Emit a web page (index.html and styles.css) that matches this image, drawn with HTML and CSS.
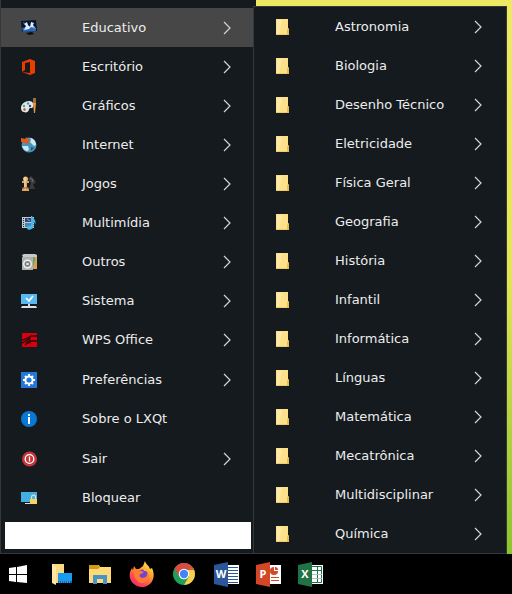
FILE: index.html
```html
<!DOCTYPE html>
<html lang="pt-BR">
<head>
<meta charset="utf-8">
<meta name="viewport" content="width=device-width, initial-scale=1">
<title>Menu de aplicativos</title>
<link rel="stylesheet" href="styles.css">
</head>
<body>
<svg class="defs" aria-hidden="true">
  <symbol id="chevron" viewBox="0 0 8 14"><path d="M1 1L7 7L1 13" fill="none" stroke="#d3d5d6" stroke-width="1.2"/></symbol>
  <symbol id="folder" viewBox="0 0 16 16"><path d="M2 0H14V9L15 10V16H2Z" fill="#fde08a"/><path d="M3 1H8L5 15H3Z" fill="#ffe9a8"/><path d="M13 16V11L14 9L15 10V16Z" fill="#e9bd4c"/><path d="M2 15H13V16H2Z" fill="#f0cd6c"/></symbol>
</svg>
<main class="desktop">
  <nav class="menu menu-main" aria-label="Menu principal">
    <ul class="items">
      <li><button class="item active" type="button">
        <svg class="icon" viewBox="0 0 16 16"><path d="M0 1L15 0L16 11L1 12Z" fill="#07142f"/><path d="M1 8L8 6L15 8V11L2 12Z" fill="#2f66b4"/><path d="M3 4L6 2L7 5L9 7L10 2L13 3L12 5L14 8L10 7L8 9L3 10L5 6Z" fill="#dcecff"/><path d="M2 2L4 3L3 4ZM13 6L15 9L12 8Z" fill="#6aa7ed"/><path d="M5 13L11 12L13 14L8 15Z" fill="#0b0d11"/></svg>
        <span class="label">Educativo</span><svg class="chevron"><use href="#chevron"/></svg></button></li>
      <li><button class="item" type="button">
        <svg class="icon" viewBox="0 0 16 16"><path d="M1 3L9 0L14 2V14L9 16L1 13L9 14V3L4 4V11L1 13Z" fill="#eb3c00"/></svg>
        <span class="label">Escritório</span><svg class="chevron"><use href="#chevron"/></svg></button></li>
      <li><button class="item" type="button">
        <svg class="icon" viewBox="0 0 16 16"><path d="M0 10C0 6 4 3 8 3C12 3 13 6 12 9C11 11 9 9 8 11C8 14 5 15 3 14C1 14 0 12 0 10Z" fill="#dfe9e9"/><circle cx="3" cy="8" r="1.2" fill="#58a94d"/><circle cx="7" cy="5.5" r="1.2" fill="#3e9dc5"/><circle cx="3.5" cy="11.5" r="1.2" fill="#c44040"/><circle cx="9" cy="8" r="1.2" fill="#314d72"/><path d="M12 0H15V5H12Z" fill="#a56b3c"/><path d="M12 5H15L14 15H13Z" fill="#e69a43"/></svg>
        <span class="label">Gráficos</span><svg class="chevron"><use href="#chevron"/></svg></button></li>
      <li><button class="item" type="button">
        <svg class="icon" viewBox="0 0 16 16"><circle cx="8" cy="8" r="7.5" fill="#4795b9"/><path d="M9 1C12 1 15 4 15 8L13 9L11 7L9 5L10 3ZM3 9L7 9L8 12L7 14C4 14 2 12 1 9Z" fill="#cce9f1"/><path d="M10 10L13 11L10 14Z" fill="#1c5b82"/><path d="M0 1L5 2V0L9 4L5 8V6L0 5Z" fill="#e4591b"/></svg>
        <span class="label">Internet</span><svg class="chevron"><use href="#chevron"/></svg></button></li>
      <li><button class="item" type="button">
        <svg class="icon" viewBox="0 0 16 16"><path d="M7 3L10 0L13 3L15 7L12 8L14 13H8L10 7Z" fill="#3d3b3a"/><path d="M9 2L12 4L11 6" fill="none" stroke="#77716a"/><circle cx="4.5" cy="3" r="2.5" fill="#e4b979"/><path d="M1 5H8V7H6V11L8 13V15H1V13L3 11V7H1Z" fill="#d8a45f"/><path d="M4 1V14" stroke="#ffe6b2"/><path d="M1 12H8" stroke="#8b5b2c"/></svg>
        <span class="label">Jogos</span><svg class="chevron"><use href="#chevron"/></svg></button></li>
      <li><button class="item" type="button">
        <svg class="icon" viewBox="0 0 16 16"><path d="M1 2H13V13H1Z" fill="#b9cbd2"/><path d="M4 3H11V7H4Z" fill="#354675"/><path d="M4 8H11V12H4Z" fill="#4a87ac"/><path d="M2.5 3V13M12 3V13" stroke="#23323b" stroke-dasharray="1 1"/><path d="M6 4L9 6" stroke="#b493c9"/><path d="M11 1C12 4 16 5 14 10C14 7 13 7 12 7V12C12 15 6 16 6 13C6 11 9 10 10 11V1Z" fill="#42b8ef"/></svg>
        <span class="label">Multimídia</span><svg class="chevron"><use href="#chevron"/></svg></button></li>
      <li><button class="item" type="button">
        <svg class="icon" viewBox="0 0 16 16"><path d="M1 1L3 0H14L16 1V3H2Z" fill="#c7c9c7"/><path d="M10 3H16V15H10Z" fill="#d7a257"/><path d="M11 3H14V7L12 13Z" fill="#6f9d69"/><path d="M1 3H12V16H1Z" fill="#aeb2ae"/><circle cx="6.5" cy="10" r="4.5" fill="#f0f1ef"/><circle cx="6.5" cy="10" r="3" fill="#7d837f"/><circle cx="6.5" cy="10" r="1.3" fill="#e3e5e3"/></svg>
        <span class="label">Outros</span><svg class="chevron"><use href="#chevron"/></svg></button></li>
      <li><button class="item" type="button">
        <svg class="icon" viewBox="0 0 16 16"><path d="M0 1H16V11H0Z" fill="#57b9ef"/><path d="M5 5L8 8L12 3" fill="none" stroke="#fff" stroke-width="1.7"/><path d="M7 11H9V13H7ZM1 13H15L16 15H0Z" fill="#d9e0e5"/></svg>
        <span class="label">Sistema</span><svg class="chevron"><use href="#chevron"/></svg></button></li>
      <li><button class="item" type="button">
        <svg class="icon" viewBox="0 0 16 16"><rect x="1" y="1" width="15" height="14" rx="1" fill="#d7000f"/><path d="M1 8C5 8 7 5 10 4H16M1 11C5 10 7 7 9 6L8 9H16M7 9L5 12L10 10" fill="none" stroke="#2c080b" stroke-width="1.3"/></svg>
        <span class="label">WPS Office</span><svg class="chevron"><use href="#chevron"/></svg></button></li>
    </ul>
    <ul class="items">
      <li><button class="item" type="button">
        <svg class="icon" viewBox="0 0 16 16"><path d="M0 0H16V16H0Z" fill="#2677db"/><path d="M8 2V14M2 8H14M4 4L12 12M12 4L4 12" stroke="#fff" stroke-width="2"/><circle cx="8" cy="8" r="3.6" fill="#2677db" stroke="#fff" stroke-width="2"/></svg>
        <span class="label">Preferências</span><svg class="chevron"><use href="#chevron"/></svg></button></li>
      <li><button class="item" type="button">
        <svg class="icon" viewBox="0 0 16 16"><circle cx="8" cy="8" r="8" fill="#0878d4"/><path d="M7 3H9V5H7ZM7 6H9V13H7Z" fill="#fff"/></svg>
        <span class="label">Sobre o LXQt</span></button></li>
    </ul>
    <ul class="items">
      <li><button class="item" type="button">
        <svg class="icon" viewBox="0 0 16 16"><circle cx="8.5" cy="8" r="7.5" fill="#c5353b"/><circle cx="8.5" cy="8" r="4.3" fill="none" stroke="#fff" stroke-width="1.3"/><path d="M8.5 5.5V10.5" stroke="#fff" stroke-width="1.3"/></svg>
        <span class="label">Sair</span><svg class="chevron"><use href="#chevron"/></svg></button></li>
      <li><button class="item" type="button">
        <svg class="icon" viewBox="0 0 16 16"><path d="M0 2H16V12H0Z" fill="#45aee0"/><path d="M4 13H10V14H4Z" fill="#d8e3e9"/><path d="M10.5 9V7C10.5 4.5 14.5 4.5 14.5 7V9" fill="none" stroke="#dce0dc" stroke-width="1.2"/><path d="M9 9H16V14H9Z" fill="#f4d35e"/></svg>
        <span class="label">Bloquear</span></button></li>
    </ul>
    <input class="search" type="text" aria-label="Pesquisar">
  </nav>
  <nav class="menu menu-sub" aria-label="Educativo">
    <ul class="items">
      <li><button class="item" type="button"><svg class="icon"><use href="#folder"/></svg><span class="label">Astronomia</span><svg class="chevron"><use href="#chevron"/></svg></button></li>
      <li><button class="item" type="button"><svg class="icon"><use href="#folder"/></svg><span class="label">Biologia</span><svg class="chevron"><use href="#chevron"/></svg></button></li>
      <li><button class="item" type="button"><svg class="icon"><use href="#folder"/></svg><span class="label">Desenho Técnico</span><svg class="chevron"><use href="#chevron"/></svg></button></li>
      <li><button class="item" type="button"><svg class="icon"><use href="#folder"/></svg><span class="label">Eletricidade</span><svg class="chevron"><use href="#chevron"/></svg></button></li>
      <li><button class="item" type="button"><svg class="icon"><use href="#folder"/></svg><span class="label">Física Geral</span><svg class="chevron"><use href="#chevron"/></svg></button></li>
      <li><button class="item" type="button"><svg class="icon"><use href="#folder"/></svg><span class="label">Geografia</span><svg class="chevron"><use href="#chevron"/></svg></button></li>
      <li><button class="item" type="button"><svg class="icon"><use href="#folder"/></svg><span class="label">História</span><svg class="chevron"><use href="#chevron"/></svg></button></li>
      <li><button class="item" type="button"><svg class="icon"><use href="#folder"/></svg><span class="label">Infantil</span><svg class="chevron"><use href="#chevron"/></svg></button></li>
      <li><button class="item" type="button"><svg class="icon"><use href="#folder"/></svg><span class="label">Informática</span><svg class="chevron"><use href="#chevron"/></svg></button></li>
      <li><button class="item" type="button"><svg class="icon"><use href="#folder"/></svg><span class="label">Línguas</span><svg class="chevron"><use href="#chevron"/></svg></button></li>
      <li><button class="item" type="button"><svg class="icon"><use href="#folder"/></svg><span class="label">Matemática</span><svg class="chevron"><use href="#chevron"/></svg></button></li>
      <li><button class="item" type="button"><svg class="icon"><use href="#folder"/></svg><span class="label">Mecatrônica</span><svg class="chevron"><use href="#chevron"/></svg></button></li>
      <li><button class="item" type="button"><svg class="icon"><use href="#folder"/></svg><span class="label">Multidisciplinar</span><svg class="chevron"><use href="#chevron"/></svg></button></li>
      <li><button class="item" type="button"><svg class="icon"><use href="#folder"/></svg><span class="label">Química</span><svg class="chevron"><use href="#chevron"/></svg></button></li>
    </ul>
  </nav>
</main>
<footer class="taskbar">
  <button class="task" type="button" aria-label="Iniciar"><svg viewBox="0 0 26 26"><path d="M6 7L13 6V13H6ZM14 6L24 4V13H14ZM6 14H13V21L6 20ZM14 14H24V22L14 21Z" fill="#fff"/></svg></button>
  <button class="task" type="button" aria-label="Mostrar área de trabalho"><svg viewBox="0 0 26 26"><path d="M7 3H19V12H13V22H11L7 21Z" fill="#fbd884"/><path d="M7 3L11 6V24L7 22Z" fill="#ffe6a5"/><path d="M13 12H27V22H13Z" fill="#169cf1"/><path d="M13 20H27V22H13Z" fill="#0868ad"/><path d="M14 21H26" stroke="#7ac8f5" stroke-dasharray="1 1"/></svg></button>
  <button class="task" type="button" aria-label="Arquivos"><svg viewBox="0 0 26 26"><path d="M2 4H12L13 6H24V22H2Z" fill="#ffd974"/><path d="M2 4H11L13 6L11 8H2Z" fill="#d39816"/><path d="M6 14H20V23H16V18H10V23H6Z" fill="#4793ca"/></svg></button>
  <button class="task" type="button" aria-label="Firefox"><svg viewBox="0 0 26 26">
    <defs><linearGradient id="fire" x1=".8" y1="0" x2=".2" y2="1"><stop offset="0" stop-color="#fff04b"/><stop offset=".4" stop-color="#ff9a2e"/><stop offset=".75" stop-color="#ff4652"/><stop offset="1" stop-color="#e52a75"/></linearGradient></defs>
    <path d="M5 5L7 8L10 8L14 5L16 0C17 4 20 4 21 8L23 7C28 18 21 26 13 26C5 26-1 19 1 11L3 7L4 9Z" fill="url(#fire)"/><circle cx="13.5" cy="14" r="5.5" fill="#7542d8"/><path d="M5 9C8 8 10 9 12 10L15 11L12 13C10 13 10 16 13 17C17 17 19 14 18 11C22 16 19 22 13 22C7 21 4 15 5 9Z" fill="#ff7b30"/><path d="M14 7C18 7 20 10 21 13C19 10 17 10 15 10Z" fill="#ffb133"/></svg></button>
  <button class="task" type="button" aria-label="Chrome"><svg viewBox="0 0 26 26"><circle cx="13" cy="13" r="11" fill="#1da15b"/><path d="M3.5 7.5A11 11 0 0 1 22.5 7.5H13L8 15.5Z" fill="#dc4b3f"/><path d="M22.5 7.5A11 11 0 0 1 13 24L18 15.5L16 8Z" fill="#fccd48"/><path d="M13 7.5H22.5L23 9H16Z" fill="#dc4b3f"/><circle cx="13" cy="13" r="5.3" fill="#fff"/><circle cx="13" cy="13" r="4.2" fill="#4385f5"/></svg></button>
  <button class="task" type="button" aria-label="Word"><svg viewBox="0 0 26 26"><path d="M13 4H26V23H13Z" fill="#fff"/><path d="M14 6.5H25M14 9.5H25M14 12.5H25M14 15.5H25M14 18.5H25M14 21.5H25" stroke="#2b579a"/><path d="M1 4L15 1V26L1 23Z" fill="#2b579a"/><text class="letter" x="8" y="17">W</text></svg></button>
  <button class="task" type="button" aria-label="PowerPoint"><svg viewBox="0 0 26 26"><path d="M13 4H26V23H13Z" fill="#fff"/><circle cx="19" cy="10" r="4" fill="#d24726"/><path d="M19 10V5H24V10Z" fill="#fff"/><path d="M20 6C22 6 23 7 23 9H20Z" fill="#d24726"/><path d="M16 16.5H24M16 19.5H24" stroke="#d24726"/><path d="M1 4L15 1V26L1 23Z" fill="#d24726"/><text class="letter" x="8" y="17">P</text></svg></button>
  <button class="task" type="button" aria-label="Excel"><svg viewBox="0 0 26 26"><path d="M13 4H26V23H13Z" fill="#fff"/><path d="M15 5.5H24.5V21.5H15M15 9.5H25M20.5 5V22" fill="none" stroke="#217346"/><path d="M15 13.5H25M15 17.5H25" stroke="#a9c9b7"/><path d="M1 4L15 1V26L1 23Z" fill="#217346"/><text class="letter" x="8" y="17">X</text></svg></button>
</footer>
</body>
</html>
```
FILE: styles.css
```css
* {
  box-sizing: border-box;
}

body {
  margin: 0;
  min-height: 100vh;
  display: flex;
  flex-direction: column;
  background: #000;
  font-family: "DejaVu Sans", sans-serif;
  font-size: 13px;
  line-height: 16px;
}

.defs {
  position: absolute;
  width: 0;
  height: 0;
}

.desktop {
  display: grid;
  grid-template-columns: 256fr 251fr;
  padding-right: 5px;
  background: linear-gradient(#eee962, #e3e553 50%, #8bc42c);
}

.menu {
  background: #151a1e;
  border: 1px solid #34383b;
}

.menu-main {
  display: flex;
  flex-direction: column;
  gap: 1px;
  padding: 8px 3px 0 0;
  border-top: 0;
  border-right: 0;
}

/* The submenu opens slightly over the edge of its parent. */
.menu-sub {
  margin: 6px 0 0 -3px;
}

.items {
  margin: 0;
  padding: 0;
  list-style: none;
}

.item {
  display: flex;
  align-items: center;
  width: 100%;
  height: 39px;
  padding: 0 22px 0 20px;
  border: 0;
  background: none;
  color: #eceded;
  font: inherit;
  text-align: left;
}

.item:hover,
.item.active {
  background: #474747;
}

.icon {
  flex: none;
  width: 16px;
  height: 16px;
  margin-right: 45px;
}

.label {
  flex: 1;
  white-space: nowrap;
}

.chevron {
  flex: none;
  width: 8px;
  height: 14px;
}

.menu-sub .item {
  padding-right: 24px;
}

.search {
  height: 27px;
  margin: 4px 2px 4px 4px;
  padding: 0 6px;
  border: 0;
  background: #fff;
  font: inherit;
}

.taskbar {
  flex: 1;
  display: flex;
  align-items: center;
  gap: 16px;
  min-height: 40px;
  padding-left: 3px;
}

.task {
  width: 26px;
  height: 26px;
  padding: 0;
  border: 0;
  background: none;
}

.task svg {
  display: block;
  width: 26px;
  height: 26px;
  overflow: visible;
}

.letter {
  fill: #fff;
  font: bold 11px "Open Sans", sans-serif;
  text-anchor: middle;
}
```
